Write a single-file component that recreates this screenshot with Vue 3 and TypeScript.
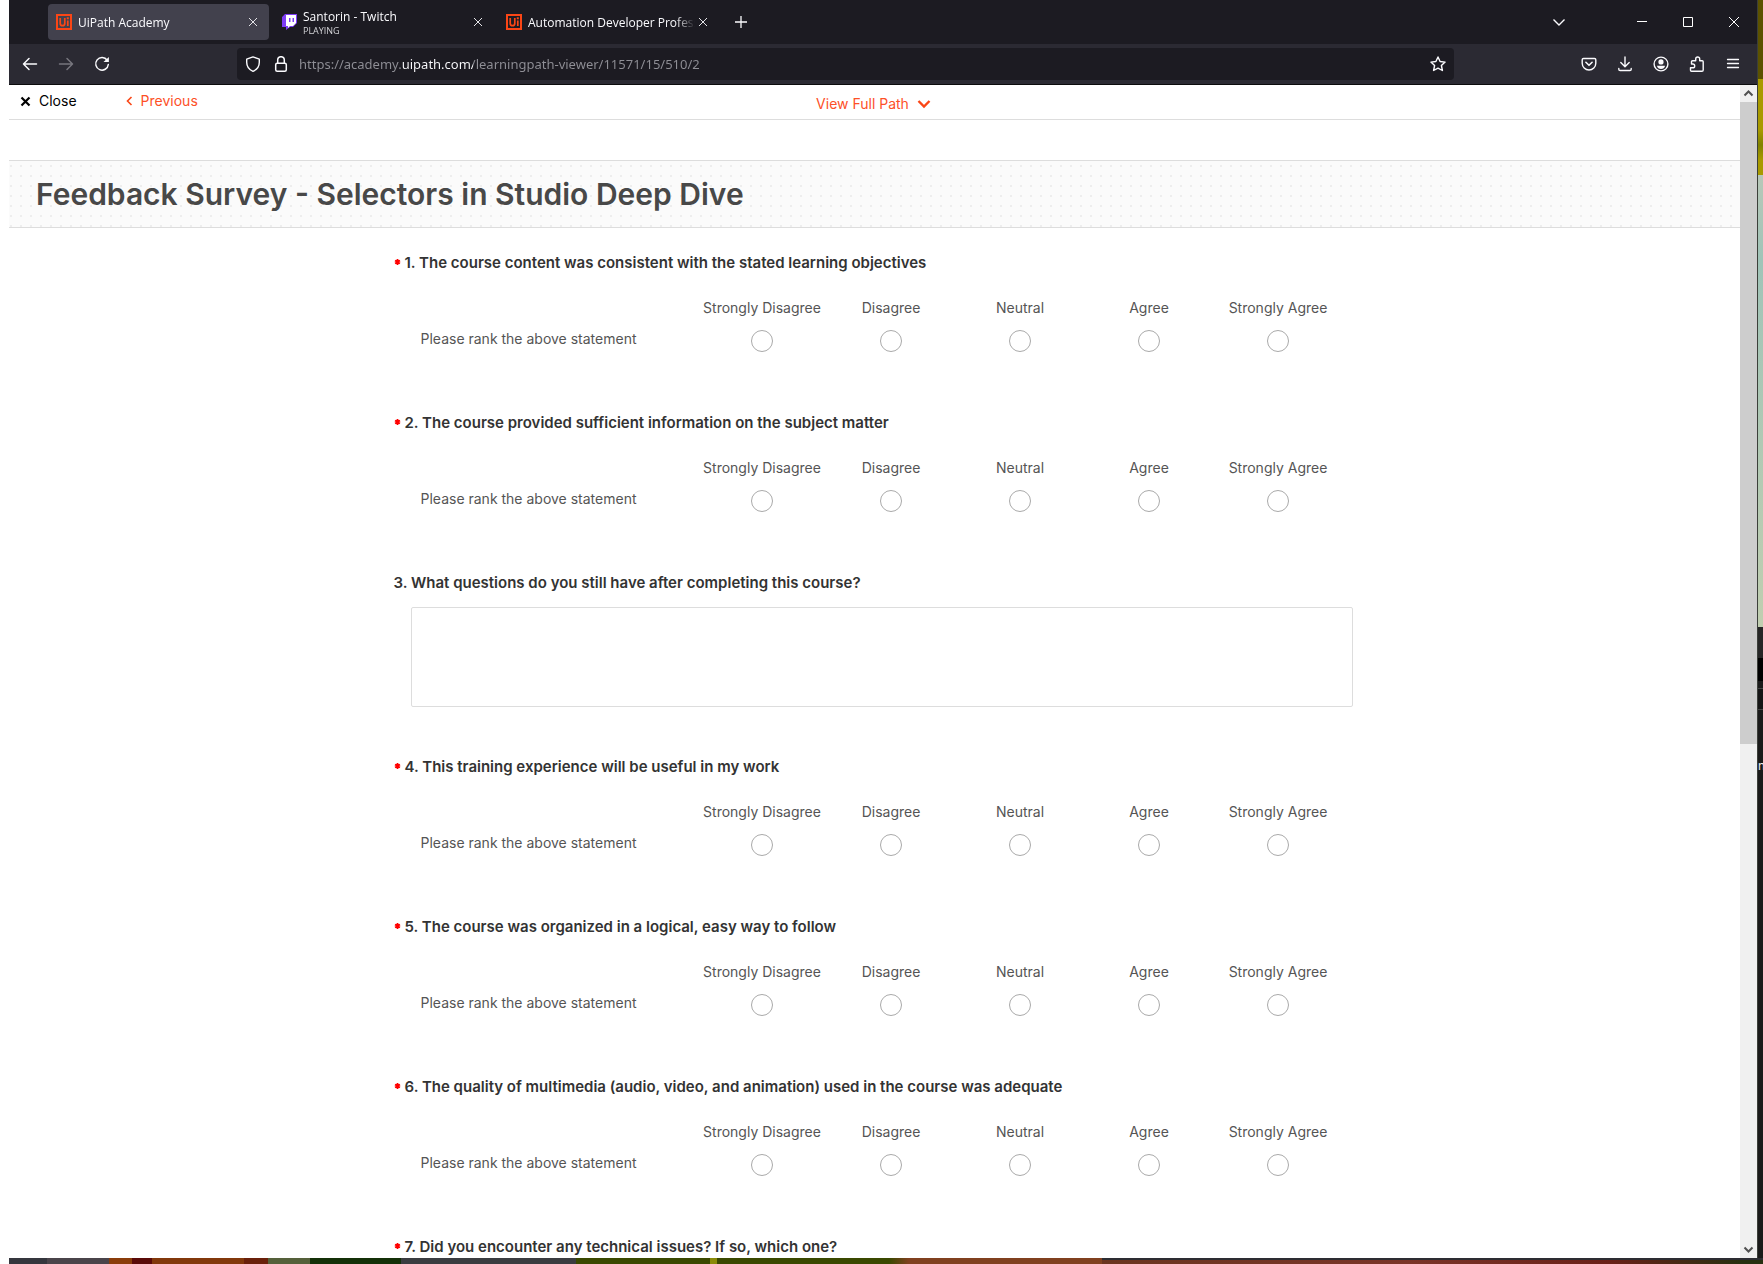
<script setup lang="ts">
import { ref } from 'vue'

interface Question {
  id: number
  text: string
  required: boolean
  kind: 'rating' | 'text'
}

const scale: string[] = ['Strongly Disagree', 'Disagree', 'Neutral', 'Agree', 'Strongly Agree']

const questions: Question[] = [
  { id: 1, text: 'The course content was consistent with the stated learning objectives', required: true, kind: 'rating' },
  { id: 2, text: 'The course provided sufficient information on the subject matter', required: true, kind: 'rating' },
  { id: 3, text: 'What questions do you still have after completing this course?', required: false, kind: 'text' },
  { id: 4, text: 'This training experience will be useful in my work', required: true, kind: 'rating' },
  { id: 5, text: 'The course was organized in a logical, easy way to follow', required: true, kind: 'rating' },
  { id: 6, text: 'The quality of multimedia (audio, video, and animation) used in the course was adequate', required: true, kind: 'rating' },
  { id: 7, text: 'Did you encounter any technical issues? If so, which one?', required: true, kind: 'text' },
]

const tabs = [
  { title: 'UiPath Academy', note: '', icon: 'uipath', active: true },
  { title: 'Santorin - Twitch', note: 'PLAYING', icon: 'twitch', active: false },
  { title: 'Automation Developer Professional', note: '', icon: 'uipath', active: false },
]

const address = ref('https://academy.uipath.com/learningpath-viewer/11571/15/510/2')
</script>

<template>
  <div class="desktop">
    <div class="window">
      <div class="tabstrip">
        <div v-for="tab in tabs" :key="tab.title" class="tab" :class="{ active: tab.active }">
          <svg v-if="tab.icon === 'uipath'" class="favicon" viewBox="0 0 16 16" fill="none" stroke="#fa4616">
            <path d="M1 1h14v14H1z" stroke-width="2" />
            <path d="M4.2 4v5.2q0 2.5 2.3 2.5t2.3-2.5V4M11.8 6.5V12" stroke-width="1.7" />
            <path d="M11.8 3.3v2" stroke-width="2" />
          </svg>
          <svg v-else class="favicon" viewBox="0 0 16 16">
            <path d="M4 0h12v9l-4 4H9l-4 3v-3H1V3z" fill="#7d3cf5" />
            <path d="M5 1h10v8l-3 3H9l-2 2v-2H5z" fill="#fff" />
            <path d="M8 4h1.5v4H8zM11.5 4H13v4h-1.5z" fill="#7d3cf5" />
          </svg>
          <div class="tab-text">
            <span class="tab-title">{{ tab.title }}</span>
            <span v-if="tab.note" class="tab-note">{{ tab.note }}</span>
          </div>
          <button class="tab-close" aria-label="Close tab">
            <svg width="10" height="10" viewBox="0 0 10 10" fill="none" stroke="#e4e4e8"><path d="M1 1l8 8M9 1L1 9" /></svg>
          </button>
        </div>
        <button class="new-tab" aria-label="New tab">
          <svg width="14" height="14" viewBox="0 0 14 14" fill="none" stroke="#fbfbfe" stroke-width="1.3"><path d="M7 1v12M1 7h12" /></svg>
        </button>
        <div class="spring"></div>
        <button class="list-tabs" aria-label="List all tabs">
          <svg width="14" height="14" viewBox="0 0 14 14" fill="none" stroke="#fbfbfe" stroke-width="1.4"><path d="M1.5 4.5L7 10l5.5-5.5" /></svg>
        </button>
        <button class="win-btn" aria-label="Minimize">
          <svg width="10" height="10" viewBox="0 0 10 10" fill="none" stroke="#fff"><path d="M0 4.5h10" /></svg>
        </button>
        <button class="win-btn" aria-label="Maximize">
          <svg width="10" height="10" viewBox="0 0 10 10" fill="none" stroke="#fff"><path d="M.5.5h9v9h-9z" /></svg>
        </button>
        <button class="win-btn" aria-label="Close window">
          <svg width="10" height="10" viewBox="0 0 10 10" fill="none" stroke="#fff"><path d="M0 0l10 10M10 0L0 10" /></svg>
        </button>
      </div>

      <div class="navbar">
        <button class="nav-btn" aria-label="Back">
          <svg width="16" height="16" viewBox="0 0 16 16" fill="none" stroke="#fbfbfe" stroke-width="1.5" stroke-linecap="round" stroke-linejoin="round"><path d="M14.5 8h-13M7 2.5L1.5 8 7 13.5" /></svg>
        </button>
        <button class="nav-btn" aria-label="Forward" disabled>
          <svg width="16" height="16" viewBox="0 0 16 16" fill="none" stroke="#77767e" stroke-width="1.5" stroke-linecap="round" stroke-linejoin="round"><path d="M1.5 8h13M9 2.5L14.5 8 9 13.5" /></svg>
        </button>
        <button class="nav-btn" aria-label="Reload">
          <svg width="16" height="16" viewBox="0 0 16 16" fill="none" stroke="#fbfbfe" stroke-width="1.5" stroke-linecap="round"><path d="M13.2 4.2A6.3 6.3 0 1 0 14.3 8.5" /><path d="M14.9 1v5H9.5z" fill="#fbfbfe" stroke="none" /></svg>
        </button>
        <div class="urlbar">
          <svg width="16" height="16" viewBox="0 0 16 16" fill="none" stroke="#fbfbfe" stroke-width="1.4" stroke-linejoin="round"><path d="M8 .9l6.3 2.3v3c0 4.4-2.6 7.5-6.3 9.1-3.7-1.6-6.3-4.7-6.3-9.1v-3z" /></svg>
          <svg width="16" height="16" viewBox="0 0 16 16" fill="none" stroke="#fbfbfe" stroke-width="1.5"><rect x="2.7" y="7.2" width="10.6" height="8" rx="1.5" /><path d="M4.7 7V4a3.3 3.3 0 0 1 6.6 0v3" /></svg>
          <input v-model="address" class="address" type="text" aria-label="Address" spellcheck="false" />
          <button class="star" aria-label="Bookmark this page">
            <svg width="16" height="16" viewBox="0 0 16 16" fill="none" stroke="#fbfbfe" stroke-width="1.4" stroke-linejoin="round"><path d="M8 1l2.1 4.5 5 .6-3.7 3.4 1 5L8 12.1l-4.4 2.4 1-5L.9 6.1l5-.6z" /></svg>
          </button>
        </div>
        <button class="nav-btn" aria-label="Save to Pocket">
          <svg width="16" height="16" viewBox="0 0 16 16" fill="none" stroke="#fbfbfe" stroke-width="1.4" stroke-linecap="round" stroke-linejoin="round"><path d="M2.5 2.5h11q1.3 0 1.3 1.3v3.4a6.8 6.8 0 0 1-13.6 0V3.8q0-1.3 1.3-1.3z" /><path d="M4.9 6.3L8 9.3l3.1-3" stroke-width="1.6" /></svg>
        </button>
        <button class="nav-btn" aria-label="Downloads">
          <svg width="16" height="16" viewBox="0 0 16 16" fill="none" stroke="#fbfbfe" stroke-width="1.4" stroke-linecap="round" stroke-linejoin="round"><path d="M8 1v9.500M3.800 6.500L8 10.700l4.200-4.200M1.800 12.500v.7q0 1.300 1.300 1.300h9.800q1.300 0 1.300-1.300v-.7" /></svg>
        </button>
        <button class="nav-btn" aria-label="Account">
          <svg width="16" height="16" viewBox="0 0 16 16" fill="none" stroke="#fbfbfe" stroke-width="1.4"><circle cx="8" cy="8" r="6.9" /><circle cx="8" cy="5.9" r="2.6" fill="#fbfbfe" stroke="none" /><path d="M3.9 9.7h8.2q-.9 3.3-4.1 3.3T3.9 9.7z" fill="#fbfbfe" stroke="none" /></svg>
        </button>
        <button class="nav-btn" aria-label="Extensions">
          <svg width="16" height="16" viewBox="0 0 16 16" fill="none" stroke="#fbfbfe" stroke-width="1.4" stroke-linejoin="round"><path d="M2.5 15.2h10.4q1.3 0 1.3-1.3V5.8q0-1-1-1h-2.5V3a2 2 0 0 0-4 0v1.8H3.5q-1 0-1 1V8h1.3a1.9 1.9 0 0 1 0 3.8H1.5v2.4q0 1 1 1z" /></svg>
        </button>
        <button class="nav-btn" aria-label="Open application menu">
          <svg width="16" height="16" viewBox="0 0 16 16" fill="none" stroke="#fbfbfe" stroke-width="1.3" stroke-linecap="round"><path d="M2.5 3.5h11M2.5 7.5h11M2.5 11.5h11" /></svg>
        </button>
      </div>

      <div class="viewport">
        <main class="page">
          <nav class="topbar">
            <div class="topbar-left">
              <a href="#" class="close-link">
                <svg width="11" height="11" viewBox="0 0 11 11" fill="none" stroke="#000" stroke-width="2.2"><path d="M1.5 1.5l8 8M9.5 1.5l-8 8" /></svg>
                Close
              </a>
              <a href="#" class="prev-link">
                <svg width="7" height="10" viewBox="0 0 7 10" fill="none" stroke="#fa4616" stroke-width="1.6"><path d="M5.5 1L1.5 5l4 4" /></svg>
                Previous
              </a>
            </div>
            <button class="full-path">
              View Full Path
              <svg width="14" height="10" viewBox="0 0 14 10" fill="none" stroke="#fa4616" stroke-width="2.4"><path d="M1.5 2L7 7.5 12.5 2" /></svg>
            </button>
            <div></div>
          </nav>

          <header class="banner">
            <h1>Feedback Survey - Selectors in Studio Deep Dive</h1>
          </header>

          <form class="survey" @submit.prevent>
            <section v-for="q in questions" :key="q.id" class="question">
              <h2 :id="`q${q.id}`">
                <svg v-if="q.required" class="mark" width="7" height="8" viewBox="0 0 7 8" role="img" aria-label="Required" stroke="#f00" stroke-width="1.8"><path d="M3.5 0v6M1 1.5l5 3M6 1.500l-5 3" /></svg>
                <span>{{ q.id }}. {{ q.text }}</span>
              </h2>
              <table v-if="q.kind === 'rating'" class="rating">
                <thead>
                  <tr>
                    <td class="statement"></td>
                    <th v-for="s in scale" :key="s" scope="col">{{ s }}</th>
                  </tr>
                </thead>
                <tbody>
                  <tr>
                    <th class="statement" scope="row">Please rank the above statement</th>
                    <td v-for="s in scale" :key="s">
                      <input type="radio" :name="`rating-${q.id}`" :value="s" :aria-label="s" />
                    </td>
                  </tr>
                </tbody>
              </table>
              <textarea v-else :aria-labelledby="`q${q.id}`"></textarea>
            </section>
          </form>
        </main>

        <div class="scrollbar" aria-hidden="true">
          <svg width="17" height="17" viewBox="0 0 17 17" fill="none" stroke="#505050" stroke-width="2"><path d="M4.5 10.5l4-4 4 4" /></svg>
          <div class="track"><div class="thumb"></div></div>
          <svg width="17" height="17" viewBox="0 0 17 17" fill="none" stroke="#505050" stroke-width="2"><path d="M4.5 6.5l4 4 4-4" /></svg>
        </div>
      </div>
    </div>
    <div class="side"><span>n</span></div>
    <div class="under"></div>
  </div>
</template>

<style>
body {
  margin: 0;
  background: #fff;
}
</style>

<style scoped>
* {
  box-sizing: border-box;
}

.desktop {
  display: grid;
  grid-template-columns: minmax(0, 1fr) 6px;
  grid-template-rows: minmax(0, 1fr) 6px;
  height: 100vh;
  padding-left: 9px;
  overflow: hidden;
  font-family: Inter, "Liberation Sans", sans-serif;
}

button {
  display: flex;
  align-items: center;
  justify-content: center;
  padding: 0;
  border: 0;
  background: none;
  font: inherit;
}

svg {
  flex: none;
}

.window {
  display: flex;
  flex-direction: column;
  min-width: 0;
}

.tabstrip {
  display: flex;
  flex: none;
  align-items: center;
  gap: 4px;
  height: 44px;
  padding-left: 39px;
  background: #1c1b22;
  color: #fbfbfe;
  font-family: "Open Sans", "Noto Sans", sans-serif;
  font-size: 12px;
}

.tab {
  display: flex;
  flex: 0 1 221px;
  align-items: center;
  gap: 6px;
  min-width: 0;
  height: 36px;
  padding: 0 8px;
  border-radius: 4px;
}

.tab.active {
  background: #42414d;
}

.favicon {
  width: 16px;
  height: 16px;
}

.tab-text {
  display: flex;
  flex: 1;
  flex-direction: column;
  min-width: 0;
  padding-top: 1px;
  overflow: hidden;
  white-space: nowrap;
  mask-image: linear-gradient(to left, transparent, #000 20px);
}

.tab-title {
  line-height: 16px;
}

.tab-note {
  font-size: 9px;
  line-height: 12px;
  color: #d4d4d8;
}

.tab-close {
  width: 16px;
  height: 16px;
  margin-left: -6px;
}

.new-tab {
  width: 36px;
  height: 36px;
}

.spring {
  flex: 1;
}

.list-tabs {
  width: 36px;
  height: 36px;
  margin-right: 42px;
}

.win-btn {
  width: 46px;
  height: 44px;
  margin-left: -4px;
}

.navbar {
  display: flex;
  flex: none;
  align-items: center;
  height: 41px;
  padding: 0 6px 0 3px;
  border-bottom: 1px solid #0c0c0d;
  background: #2b2a33;
}

.nav-btn {
  width: 36px;
  height: 32px;
}

.urlbar {
  display: flex;
  flex: 1;
  align-items: center;
  gap: 12px;
  min-width: 0;
  height: 32px;
  margin: 0 117px;
  padding: 0 8px;
  border-radius: 4px;
  background: #1c1b22;
}

/* The host name is lit, the rest of the address is dimmed. */
.address {
  flex: 1;
  min-width: 0;
  height: 24px;
  padding: 0;
  border: 0;
  margin-left: -2px;
  outline: 0;
  background: linear-gradient(to right, #8f8f96 102px, #fbfbfe 102px 174px, #8f8f96 174px);
  background-clip: text;
  color: transparent;
  font-family: "Noto Sans", "Open Sans", sans-serif;
  font-size: 13px;
}

.star {
  width: 16px;
  height: 32px;
}

.viewport {
  display: flex;
  flex: 1;
  min-height: 0;
  background: #fff;
}

.page {
  flex: 1;
  min-width: 0;
  overflow: hidden;
}

.topbar {
  display: grid;
  grid-template-columns: 1fr auto 1fr;
  height: 35px;
  padding: 0 13px 0 11px;
  border-bottom: 1px solid #ddd;
  font-size: 14px;
  line-height: 20px;
}

.topbar-left {
  display: flex;
  gap: 49px;
  padding-top: 6px;
}

.topbar a {
  display: flex;
  align-items: center;
  gap: 8px;
  height: 20px;
  text-decoration: none;
}

.topbar .close-link {
  color: #000;
}

.topbar .prev-link,
.full-path {
  color: #fd5027;
}

.full-path {
  gap: 8px;
  height: 20px;
  margin-top: 9px;
}

.banner {
  margin-top: 40px;
  padding: 14px 27px 13px;
  border: solid #ddd;
  border-width: 1px 0;
  background: #fbfbfb conic-gradient(from 270deg at 2px 2px, #eee 90deg, transparent 0) 1px 4px / 10px 10px;
}

h1 {
  margin: 0;
  color: #484848;
  font-size: 30px;
  font-weight: 600;
  line-height: 39px;
}

.survey {
  max-width: 962px;
  margin: 0 auto;
  padding-top: 25px;
}

.question {
  padding-bottom: 50px;
}

h2 {
  display: flex;
  align-items: center;
  gap: 4px;
  margin: 0;
  color: #333;
  font-size: 15px;
  font-weight: 600;
  line-height: 20px;
}

.rating {
  width: 922px;
  margin: 25px 0 0 27px;
  border-collapse: collapse;
  table-layout: fixed;
  color: #555;
  font-size: 14px;
  line-height: 20px;
}

.rating th,
.rating td {
  width: 129px;
  padding: 0;
  font-weight: 400;
  text-align: center;
  vertical-align: top;
}

.rating .statement {
  width: 277px;
  text-align: left;
}

.rating tbody th,
.rating tbody td {
  height: 45px;
  padding-top: 11px;
}

.rating input {
  display: block;
  width: 22px;
  height: 22px;
  margin: 1px auto 0;
  border: 1px solid #aaa;
  border-radius: 50%;
  appearance: none;
  background: #fff;
}

textarea {
  display: block;
  width: 942px;
  height: 100px;
  margin: 14px 0 0 17px;
  border: 1px solid #ddd;
  border-radius: 2px;
  resize: none;
  font: inherit;
}

.scrollbar {
  display: flex;
  flex: none;
  flex-direction: column;
  width: 17px;
  background: #f0f0f0;
}

.track {
  flex: 1;
}

.thumb {
  height: 56.4%;
  background: #cdcdcd;
}

.side {
  display: flex;
  align-items: center;
  overflow: hidden;
  border-left: 1px solid #3c3f3a;
  background: linear-gradient(#5c5200 79px, #a89a00 79px 130px, #808200 145px, #a89a00 160px 175px, #b8c8b8 175px, #a0c4b8 260px, #c0ceb0 627px, #262626 627px 658px, #000 658px 681px, #1a1a1a 681px 688px, #444 688px 689px, #151515 689px 709px, #444 709px 710px, #1a1a1a 710px);
  color: #eee;
  font-size: 12px;
}

.side span {
  padding-top: 272px;
}

.under {
  grid-column: 1 / -1;
  background:
    linear-gradient(#2d2d33, #2d2d33) 1093px 0 / 100% 2px no-repeat,
    linear-gradient(to right, #35363d 38px, #4a444a 38px 100px, #8a3c0a 100px 123px, #5a0a08 123px 143px, #82380b 143px 235px, #6a200a 235px 259px, #55603a 259px 301px, #143008 301px 392px, #3a3c40 392px 567px, #3a4800 567px 701px, #8a8a08 701px 708px, #3a4800 708px 880px, #80401f 900px 1093px, #6a341f 1093px, #7a3428 1400px, #6a2018 1600px, #263010 1735px);
}
</style>
